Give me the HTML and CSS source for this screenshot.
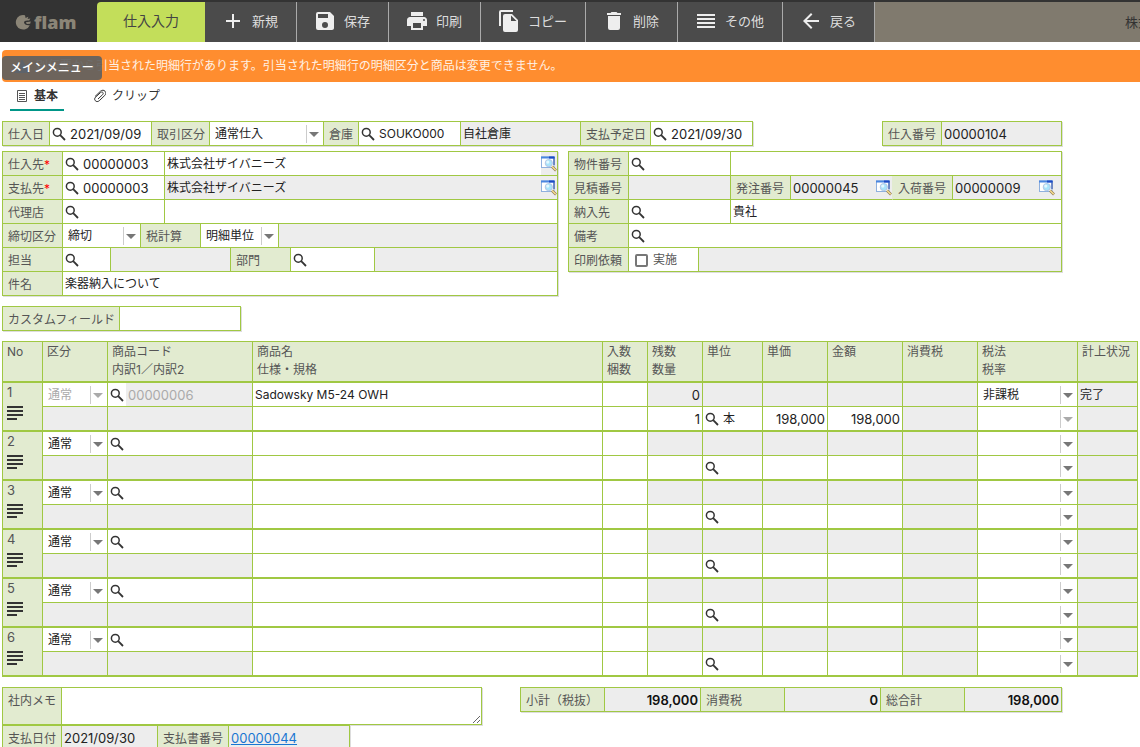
FILE: index.html
```html
<!DOCTYPE html>
<html lang="ja">
<head>
    <meta charset="UTF-8">
    <meta name="viewport" content="width=device-width, initial-scale=1.0">
    <title>仕入入力</title>
    <link rel="stylesheet" href="styles.css">
</head>
<body>

    <!-- Shared icons -->
    <svg class="sprite" aria-hidden="true">
        <symbol id="i-search" viewBox="0 0 14 14">
            <circle cx="5.3" cy="5.3" r="3.9" fill="none" stroke="#333" stroke-width="1.5"/>
            <path d="M8.2 8.2 13 13" stroke="#333" stroke-width="1.8"/>
        </symbol>
        <symbol id="i-lookup" viewBox="0 0 16 16">
            <rect x="0.5" y="1" width="12.5" height="10.5" fill="#fff" stroke="#8fb0de"/>
            <path d="M13 1v8" stroke="#1b3f9e"/>
            <rect x="0" y="0.5" width="13.5" height="2" fill="#4a86e0"/>
            <rect x="8" y="0.5" width="5.5" height="2" fill="#1d49c4"/>
            <path d="M11 10.5 15 14.5" stroke="#8c7a58" stroke-width="2.6"/>
            <path d="M11 10.5 14.8 14.3" stroke="#f8dc8c" stroke-width="1.5"/>
            <circle cx="7.8" cy="7.1" r="3.6" fill="#a9e4fb" stroke="#b4c6e4"/>
            <circle cx="6.8" cy="6.1" r="1.6" fill="#e4f8ff"/>
        </symbol>
        <symbol id="i-lines" viewBox="0 0 16 14">
            <path d="M0 0h16v2H0zM0 4h16v2H0zM0 8h16v2H0zM0 12h10v2H0z" fill="#333"/>
        </symbol>
    </svg>

    <header class="topbar">
        <a class="logo" href="#" aria-label="メインメニュー">
            <svg width="16" height="17" viewBox="0 0 16 17" aria-hidden="true">
                <path d="M10 1.2A7.3 7.3 0 1 0 14.8 11.2C11.5 11.6 9.2 10.4 9 8.6 9 6.8 11 6.2 14.2 6.6L15.4 4.6 12.6 5 13.4 2.8 10.6 4Z" fill="#8b8577"/>
                <path d="M10.8 8.2 15.8 7.4 15.2 9.8 11.8 10Z" fill="#8b8577"/>
            </svg>
            <span>flam</span>
        </a>
        <h1 class="screen-name">仕入入力</h1>
        <button type="button" class="tool">
            <svg viewBox="0 0 24 24"><path d="M19 13h-6v6h-2v-6H5v-2h6V5h2v6h6z"/></svg>新規
        </button>
        <button type="button" class="tool">
            <svg viewBox="0 0 24 24"><path d="M17 3H5a2 2 0 0 0-2 2v14a2 2 0 0 0 2 2h14c1.100 0 2-.9 2-2V7zm-5 16a3 3 0 1 1 0-6 3 3 0 0 1 0 6zm3-10H5V5h10z"/></svg>保存
        </button>
        <button type="button" class="tool">
            <svg viewBox="0 0 24 24"><path d="M19 8H5c-1.660 0-3 1.340-3 3v6h4v4h12v-4h4v-6c0-1.660-1.340-3-3-3zm-3 11H8v-5h8zm3-7a1 1 0 1 1 0-2 1 1 0 0 1 0 2zM18 3H6v4h12z"/></svg>印刷
        </button>
        <button type="button" class="tool">
            <svg viewBox="0 0 24 24"><path d="M16 1H4a2 2 0 0 0-2 2v14h2V3h12zm-1 4 6 6v10a2 2 0 0 1-2 2H7.990A2 2 0 0 1 6 21V7a2 2 0 0 1 2-2zm-1 7h5.500L14 6.500z"/></svg>コピー
        </button>
        <button type="button" class="tool">
            <svg viewBox="0 0 24 24"><path d="M6 19a2 2 0 0 0 2 2h8a2 2 0 0 0 2-2V7H6zM19 4h-3.500l-1-1h-5l-1 1H5v2h14z"/></svg>削除
        </button>
        <button type="button" class="tool">
            <svg viewBox="0 0 24 24"><path d="M3 15h18v-2H3zm0 4h18v-2H3zm0-8h18V9H3zm0-6v2h18V5z"/></svg>その他
        </button>
        <button type="button" class="tool">
            <svg viewBox="0 0 24 24"><path d="M20 11H7.830l5.590-5.590L12 4l-8 8 8 8 1.410-1.410L7.830 13H20z"/></svg>戻る
        </button>
        <div class="company">株式</div>
    </header>

    <main>
        <div class="notice" role="alert">
            <svg width="16" height="14" viewBox="0 0 16 14" aria-hidden="true"><path d="M8 0 16 14H0z" fill="#3f7fd0"/></svg>
            <span>別伝票から引当された明細行があります。引当された明細行の明細区分と商品は変更できません。</span>
            <div class="tooltip">メインメニュー</div>
        </div>

        <nav class="tabs">
            <a href="#" class="tab active">
                <svg width="12" height="14" viewBox="0 0 12 14"><path d="M1.500 1.500h9v11h-9zM3 4.500h6M3 6.500h6M3 8.500h6M3 10.500h6" fill="none" stroke="#555"/></svg>基本
            </a>
            <a href="#" class="tab">
                <svg width="12" height="14" viewBox="1 0 12 14"><path d="M2 7.500 7.500 2.200C9 .8 11 1 12 2.200 13.200 3.500 13 5.200 11.800 6.400L6.300 11.700C5 12.900 3.200 12.800 2.300 11.700 1.300 10.600 1.500 9.200 2.500 8.200L7.600 3.500C8.400 2.800 9.400 2.900 9.900 3.500 10.400 4.100 10.300 5 9.600 5.700L5 10" fill="none" stroke="#333"/></svg>クリップ
            </a>
        </nav>

        <form class="entry">
            <div class="line">
                <div class="panel">
                    <div class="row">
                        <label class="label w47" for="date">仕入日</label>
                        <div class="field w102"><button type="button" class="search" aria-label="仕入日を選択"><svg><use href="#i-search"/></svg></button><input class="num" id="date" value="2021/09/09"></div>
                        <label class="label w58" for="deal">取引区分</label>
                        <div class="field select w114"><select id="deal"><option>通常仕入</option></select></div>
                        <label class="label w35" for="store">倉庫</label>
                        <div class="field w102"><button type="button" class="search" aria-label="倉庫を検索"><svg><use href="#i-search"/></svg></button><input id="store" value="SOUKO000"></div>
                        <div class="field readonly w120"><input value="自社倉庫" aria-label="倉庫名" readonly></div>
                        <label class="label w70" for="paydate">支払予定日</label>
                        <div class="field w102"><button type="button" class="search" aria-label="支払予定日を選択"><svg><use href="#i-search"/></svg></button><input class="num" id="paydate" value="2021/09/30"></div>
                    </div>
                </div>
                <div class="panel">
                    <div class="row">
                        <label class="label w59" for="number">仕入番号</label>
                        <div class="field readonly w120"><input class="num" id="number" value="00000104" readonly></div>
                    </div>
                </div>
            </div>

            <div class="columns">
                <div class="panel">
                    <div class="row">
                        <label class="label w60" for="supplier">仕入先<em>*</em></label>
                        <div class="field w102"><button type="button" class="search" aria-label="仕入先を検索"><svg><use href="#i-search"/></svg></button><input class="num" id="supplier" value="00000003"></div>
                        <div class="field grow"><input value="株式会社ザイバニーズ" aria-label="仕入先名"><button type="button" class="lookup" aria-label="仕入先を表示"><svg><use href="#i-lookup"/></svg></button></div>
                    </div>
                    <div class="row">
                        <label class="label w60" for="payee">支払先<em>*</em></label>
                        <div class="field w102"><button type="button" class="search" aria-label="支払先を検索"><svg><use href="#i-search"/></svg></button><input class="num" id="payee" value="00000003"></div>
                        <div class="field readonly grow"><input value="株式会社ザイバニーズ" aria-label="支払先名" readonly><button type="button" class="lookup" aria-label="支払先を表示"><svg><use href="#i-lookup"/></svg></button></div>
                    </div>
                    <div class="row">
                        <label class="label w60" for="agency">代理店</label>
                        <div class="field w102"><button type="button" class="search" aria-label="代理店を検索"><svg><use href="#i-search"/></svg></button><input id="agency"></div>
                        <div class="field grow"><input aria-label="代理店名"></div>
                    </div>
                    <div class="row">
                        <label class="label w60" for="closing">締切区分</label>
                        <div class="field select w78"><select id="closing"><option>締切</option></select></div>
                        <label class="label w60" for="taxcalc">税計算</label>
                        <div class="field select w78"><select id="taxcalc"><option>明細単位</option></select></div>
                        <div class="field readonly grow"></div>
                    </div>
                    <div class="row">
                        <label class="label w60" for="staff">担当</label>
                        <div class="field w48"><button type="button" class="search" aria-label="担当を検索"><svg><use href="#i-search"/></svg></button><input id="staff"></div>
                        <div class="field readonly w120"></div>
                        <label class="label w60" for="section">部門</label>
                        <div class="field w84"><button type="button" class="search" aria-label="部門を検索"><svg><use href="#i-search"/></svg></button><input id="section"></div>
                        <div class="field readonly grow"></div>
                    </div>
                    <div class="row">
                        <label class="label w60" for="subject">件名</label>
                        <div class="field grow"><input id="subject" value="楽器納入について"></div>
                    </div>
                </div>

                <div class="panel">
                    <div class="row">
                        <label class="label w60" for="project">物件番号</label>
                        <div class="field w102"><button type="button" class="search" aria-label="物件番号を検索"><svg><use href="#i-search"/></svg></button><input id="project"></div>
                        <div class="field grow"><input aria-label="物件名"></div>
                    </div>
                    <div class="row">
                        <label class="label w60" for="estimate">見積番号</label>
                        <div class="field readonly w102"><input id="estimate" readonly></div>
                        <label class="label w60" for="order">発注番号</label>
                        <div class="field readonly w102"><input class="num" id="order" value="00000045" readonly><button type="button" class="lookup" aria-label="発注を表示"><svg><use href="#i-lookup"/></svg></button></div>
                        <label class="label joined w60" for="arrival">入荷番号</label>
                        <div class="field readonly grow spaced"><input class="num" id="arrival" value="00000009" readonly><button type="button" class="lookup" aria-label="入荷を表示"><svg><use href="#i-lookup"/></svg></button></div>
                    </div>
                    <div class="row">
                        <label class="label w60" for="delivery">納入先</label>
                        <div class="field w102"><button type="button" class="search" aria-label="納入先を検索"><svg><use href="#i-search"/></svg></button><input id="delivery"></div>
                        <div class="field grow"><input value="貴社" aria-label="納入先名"></div>
                    </div>
                    <div class="row">
                        <label class="label w60" for="remarks">備考</label>
                        <div class="field grow"><button type="button" class="search" aria-label="備考を検索"><svg><use href="#i-search"/></svg></button><input id="remarks"></div>
                    </div>
                    <div class="row">
                        <span class="label w60">印刷依頼</span>
                        <div class="field w70"><label class="check"><input type="checkbox">実施</label></div>
                        <div class="field readonly grow"></div>
                    </div>
                </div>
            </div>

            <div class="line">
                <div class="panel">
                    <div class="row">
                        <label class="label w117" for="custom">カスタムフィールド</label>
                        <div class="field w121"><input id="custom"></div>
                    </div>
                </div>
            </div>

            <table class="items">
                <colgroup>
                    <col class="w40"><col class="w65"><col class="w145"><col><col class="w45"><col class="w55">
                    <col class="w60"><col class="w65"><col class="w75"><col class="w75"><col class="w100"><col class="w60">
                </colgroup>
                <thead>
                    <tr>
                        <th>No</th>
                        <th>区分</th>
                        <th>商品コード<br>内訳1／内訳2</th>
                        <th>商品名<br>仕様・規格</th>
                        <th>入数<br>梱数</th>
                        <th>残数<br>数量</th>
                        <th>単位</th>
                        <th>単価</th>
                        <th>金額</th>
                        <th>消費税</th>
                        <th>税法<br>税率</th>
                        <th>計上状況</th>
                    </tr>
                </thead>
                <tbody id="items"></tbody>
            </table>

            <div class="line footer">
                <div class="memo-block">
                    <div class="panel">
                        <div class="row tall">
                            <label class="label w59" for="memo">社内メモ</label>
                            <div class="field grow"><textarea id="memo"></textarea></div>
                        </div>
                    </div>
                    <div class="panel payment">
                        <div class="row">
                            <span class="label w59">支払日付</span>
                            <div class="field readonly w96"><span class="text num">2021/09/30</span></div>
                            <span class="label w71">支払書番号</span>
                            <div class="field readonly w121"><a class="text num" href="#">00000044</a></div>
                        </div>
                    </div>
                </div>
                <div class="panel totals">
                    <div class="row">
                        <span class="label w84">小計（税抜）</span>
                        <div class="field readonly w96"><span class="text num">198,000</span></div>
                        <span class="label w84">消費税</span>
                        <div class="field readonly w96"><span class="text num">0</span></div>
                        <span class="label w84">総合計</span>
                        <div class="field readonly w97"><span class="text num">198,000</span></div>
                    </div>
                </div>
            </div>
        </form>
    </main>

    <script src="script.js"></script>
</body>
</html>
```

FILE: styles.css
```css
* {
    box-sizing: border-box;
}

body {
    margin: 0;
    height: 100vh;
    display: flex;
    flex-direction: column;
    background-color: #fff;
    color: #222;
    font-family: Inter, "Noto Sans CJK JP", sans-serif;
    font-size: 12px;
    line-height: 18px;
}

button,
input,
select,
textarea {
    margin: 0;
    padding: 0;
    border: 0;
    background: none;
    color: inherit;
    font: inherit;
}

button {
    cursor: pointer;
}

.sprite {
    display: none;
}

/* Toolbar */
.topbar {
    display: flex;
    flex: none;
    height: 42px;
    padding-top: 2px;
    background-color: #333;
    overflow: hidden;
}

.logo {
    display: flex;
    flex: none;
    align-items: center;
    gap: 3px;
    width: 97px;
    padding-left: 15px;
    color: #8b8577;
    font-family: "Open Sans", sans-serif;
    font-size: 18px;
    font-weight: 800;
    text-decoration: none;
}

.screen-name {
    flex: none;
    width: 108px;
    margin: 0;
    border-top-left-radius: 4px;
    background-color: #c3de5a;
    color: #444;
    font-size: 14px;
    font-weight: normal;
    line-height: 38px;
    text-align: center;
}

.tool {
    display: flex;
    flex: none;
    align-items: center;
    gap: 7px;
    padding: 0 18px 3px 16px;
    border-right: 1px solid #aaa;
    background-color: #4b4b4b;
    color: #ddd;
    font-size: 13px;
}

.tool svg {
    width: 24px;
    height: 24px;
    fill: #eee;
}

.company {
    flex: 1;
    padding-left: 250px;
    background-color: #807a6e;
    color: #333;
    font-size: 13px;
    line-height: 40px;
    white-space: nowrap;
    overflow: hidden;
}

/* Content */
main {
    flex: 1;
    min-height: 0;
    padding: 8px 0 0 2px;
    overflow: auto;
    scrollbar-width: none;
}

.notice {
    position: relative;
    display: flex;
    align-items: center;
    gap: 6px;
    height: 32px;
    padding-left: 12px;
    border-radius: 4px 0 0 4px;
    background-color: #ff8d2f;
    color: #fff1e4;
}

.tooltip {
    position: absolute;
    left: 0;
    top: 6px;
    padding: 3px 8px;
    border-radius: 4px;
    background-color: rgba(97, 97, 97, 0.92);
    color: #fff;
    font-weight: 500;
}

.tabs {
    display: flex;
    gap: 24px;
    padding-left: 8px;
}

.tab {
    display: flex;
    align-items: center;
    gap: 6px;
    height: 29px;
    padding: 1px 6px 0;
    border-bottom: 2px solid transparent;
    color: #333;
    text-decoration: none;
}

.tab.active {
    border-bottom-color: #009688;
    font-weight: bold;
}

.entry {
    display: flex;
    flex-direction: column;
    gap: 10px;
    padding-top: 10px;
}

.line {
    display: flex;
    justify-content: space-between;
    align-items: flex-start;
    max-width: 1060px;
}

.columns {
    display: grid;
    grid-template-columns: 556fr 494fr;
    gap: 10px;
    align-items: start;
    max-width: 1060px;
    margin-top: -5px;
}

.panel {
    border: 1px solid #a0c843;
    border-width: 1px 1px 0 0;
    box-shadow: 1px 1px 0 #ddd;
}

.row {
    display: flex;
    height: 24px;
}

.row.tall {
    height: 37px;
}

.label,
.field {
    flex: none;
    border: 1px solid #a0c843;
    border-width: 0 0 1px 1px;
}

.label {
    padding: 4px 0 0 5px;
    background-color: #e2ebd0;
    color: #555;
    white-space: nowrap;
}

.label.joined {
    border-left-color: #e2ebd0;
}

.label em {
    color: #f00;
    font-style: normal;
}

.field {
    display: flex;
    align-items: stretch;
    min-width: 0;
    background-color: #fff;
}

.field.grow {
    flex: 1;
}

.field.spaced {
    padding-right: 6px;
}

.readonly {
    background-color: #ededed;
}

.field input:not([type="checkbox"]),
.items input {
    flex: 1;
    width: 100%;
    min-width: 0;
    padding: 1px 2px 0;
}

.text {
    flex: 1;
    padding: 3px 2px 0;
}

a.text {
    color: #1976d2;
}

/* Codes, dates and amounts */
.num {
    font-size: 13px;
}

.search {
    flex: none;
    width: 18px;
    padding-left: 2px;
    text-align: left;
}

.search svg {
    display: block;
    width: 14px;
    height: 14px;
}

.lookup {
    flex: none;
    width: 16px;
    background-color: #ededed;
}

.lookup svg {
    display: block;
    width: 16px;
    height: 16px;
}

/* Drop-downs: divider and arrow */
.select {
    position: relative;
}

.select select {
    flex: 1;
    width: 100%;
    padding: 1px 0 0 5px;
    appearance: none;
}

.select::before,
.select::after {
    content: "";
    position: absolute;
    pointer-events: none;
}

.select::before {
    top: 3px;
    bottom: 2px;
    right: 16px;
    border-left: 1px solid #ccc;
}

.select::after {
    top: 10px;
    right: 4px;
    border: 5px solid transparent;
    border-top-color: #777;
    border-bottom: 0;
}

.select.disabled::after {
    border-top-color: #aaa;
}

.check {
    display: flex;
    align-items: center;
    gap: 5px;
    padding: 1px 0 0 6px;
    color: #555;
}

.check input {
    width: 13px;
    height: 13px;
    border: 2px solid #777;
    border-radius: 2px;
    appearance: none;
}

textarea {
    display: block;
    width: 100%;
    height: 36px;
    padding: 2px;
    resize: vertical;
}

/* Item lines */
.items {
    width: calc(100% - 2px);
    border-collapse: separate;
    border-spacing: 0;
    border-right: 1px solid #a0c843;
    table-layout: fixed;
}

.items th,
.items td {
    padding: 0;
    border: 0 solid #a0c843;
    border-left-width: 1px;
}

.items thead th {
    height: 42px;
    padding: 1px 4px;
    border-top-width: 1px;
    border-bottom-width: 2px;
}

.items th {
    background-color: #e2ebd0;
    color: #555;
    font-weight: normal;
    text-align: left;
    vertical-align: top;
    white-space: nowrap;
}

.items tbody th {
    padding-left: 4px;
    border-bottom-width: 2px;
    font-size: 13px;
}

.items .upper td {
    height: 24px;
    border-bottom-width: 1px;
}

.items .lower td {
    height: 25px;
    border-bottom-width: 2px;
}

.cell {
    display: flex;
    height: 23px;
}

.cell input:disabled {
    background-color: #ededed;
}

.cell :disabled {
    color: #aaa;
    opacity: 1;
}

.items .amount {
    text-align: right;
}

.detail {
    display: block;
    margin-top: 5px;
}

.detail svg {
    display: block;
    width: 16px;
    height: 14px;
}

.memo-block {
    flex: none;
    width: 480px;
}

.payment {
    width: 348px;
}

.totals .text {
    color: #111;
    font-weight: 600;
    text-align: right;
}

/* Column widths */
.w35 { width: 35px; }
.w40 { width: 40px; }
.w45 { width: 45px; }
.w47 { width: 47px; }
.w48 { width: 48px; }
.w55 { width: 55px; }
.w58 { width: 58px; }
.w59 { width: 59px; }
.w60 { width: 60px; }
.w65 { width: 65px; }
.w70 { width: 70px; }
.w71 { width: 71px; }
.w75 { width: 75px; }
.w78 { width: 78px; }
.w84 { width: 84px; }
.w96 { width: 96px; }
.w97 { width: 97px; }
.w100 { width: 100px; }
.w102 { width: 102px; }
.w114 { width: 114px; }
.w117 { width: 117px; }
.w120 { width: 120px; }
.w121 { width: 121px; }
.w145 { width: 145px; }
```

FILE: script.js
```javascript
const lines = [
    { code: '00000006', name: 'Sadowsky M5-24 OWH', rest: '0', qty: '1', unit: '本', price: '198,000', amount: '198,000', tax: '非課税', status: '完了', locked: true },
    {}, {}, {}, {}, {}
];

const searchButton = label =>
    `<button type="button" class="search" aria-label="${label}"><svg><use href="#i-search"/></svg></button>`;

const input = (label, value = '', attrs = '') =>
    `<input aria-label="${label}" value="${value}" ${attrs}>`;

const cell = (content, className = '') => `<td class="${className}"><div class="cell">${content}</div></td>`;

const select = (label, value = '', disabled = false) =>
    `<td><div class="cell select ${disabled ? 'disabled' : ''}"><select aria-label="${label}" ${disabled ? 'disabled' : ''}><option>${value}</option></select></div></td>`;

document.getElementById('items').innerHTML = lines.map((line, i) => `
    <tr class="upper">
        <th rowspan="2">${i + 1}<button type="button" class="detail" aria-label="明細"><svg><use href="#i-lines"/></svg></button></th>
        ${select('区分', '通常', line.locked)}
        ${cell(searchButton('商品を検索') + input('商品コード', line.code, line.locked ? 'class="num" disabled' : 'class="num"'))}
        ${cell(input('商品名', line.name))}
        ${cell(input('入数'))}
        ${cell(input('残数', line.rest, 'readonly class="num amount"'), 'readonly')}
        ${cell('', 'readonly')}
        ${cell('', 'readonly')}
        ${cell('', 'readonly')}
        ${cell('', 'readonly')}
        ${select('税法', line.tax)}
        ${cell(input('計上状況', line.status, 'readonly'), 'readonly')}
    </tr>
    <tr class="lower">
        ${cell('', 'readonly')}
        ${cell('', 'readonly')}
        ${cell(input('仕様・規格'))}
        ${cell(input('梱数'))}
        ${cell(input('数量', line.qty, 'class="num amount"'))}
        ${cell(searchButton('単位を検索') + input('単位', line.unit))}
        ${cell(input('単価', line.price, 'class="num amount"'))}
        ${cell(input('金額', line.amount, 'class="num amount"'))}
        ${cell('', 'readonly')}
        ${select('税率', '', line.locked)}
        ${cell('', 'readonly')}
    </tr>`).join('');
```
